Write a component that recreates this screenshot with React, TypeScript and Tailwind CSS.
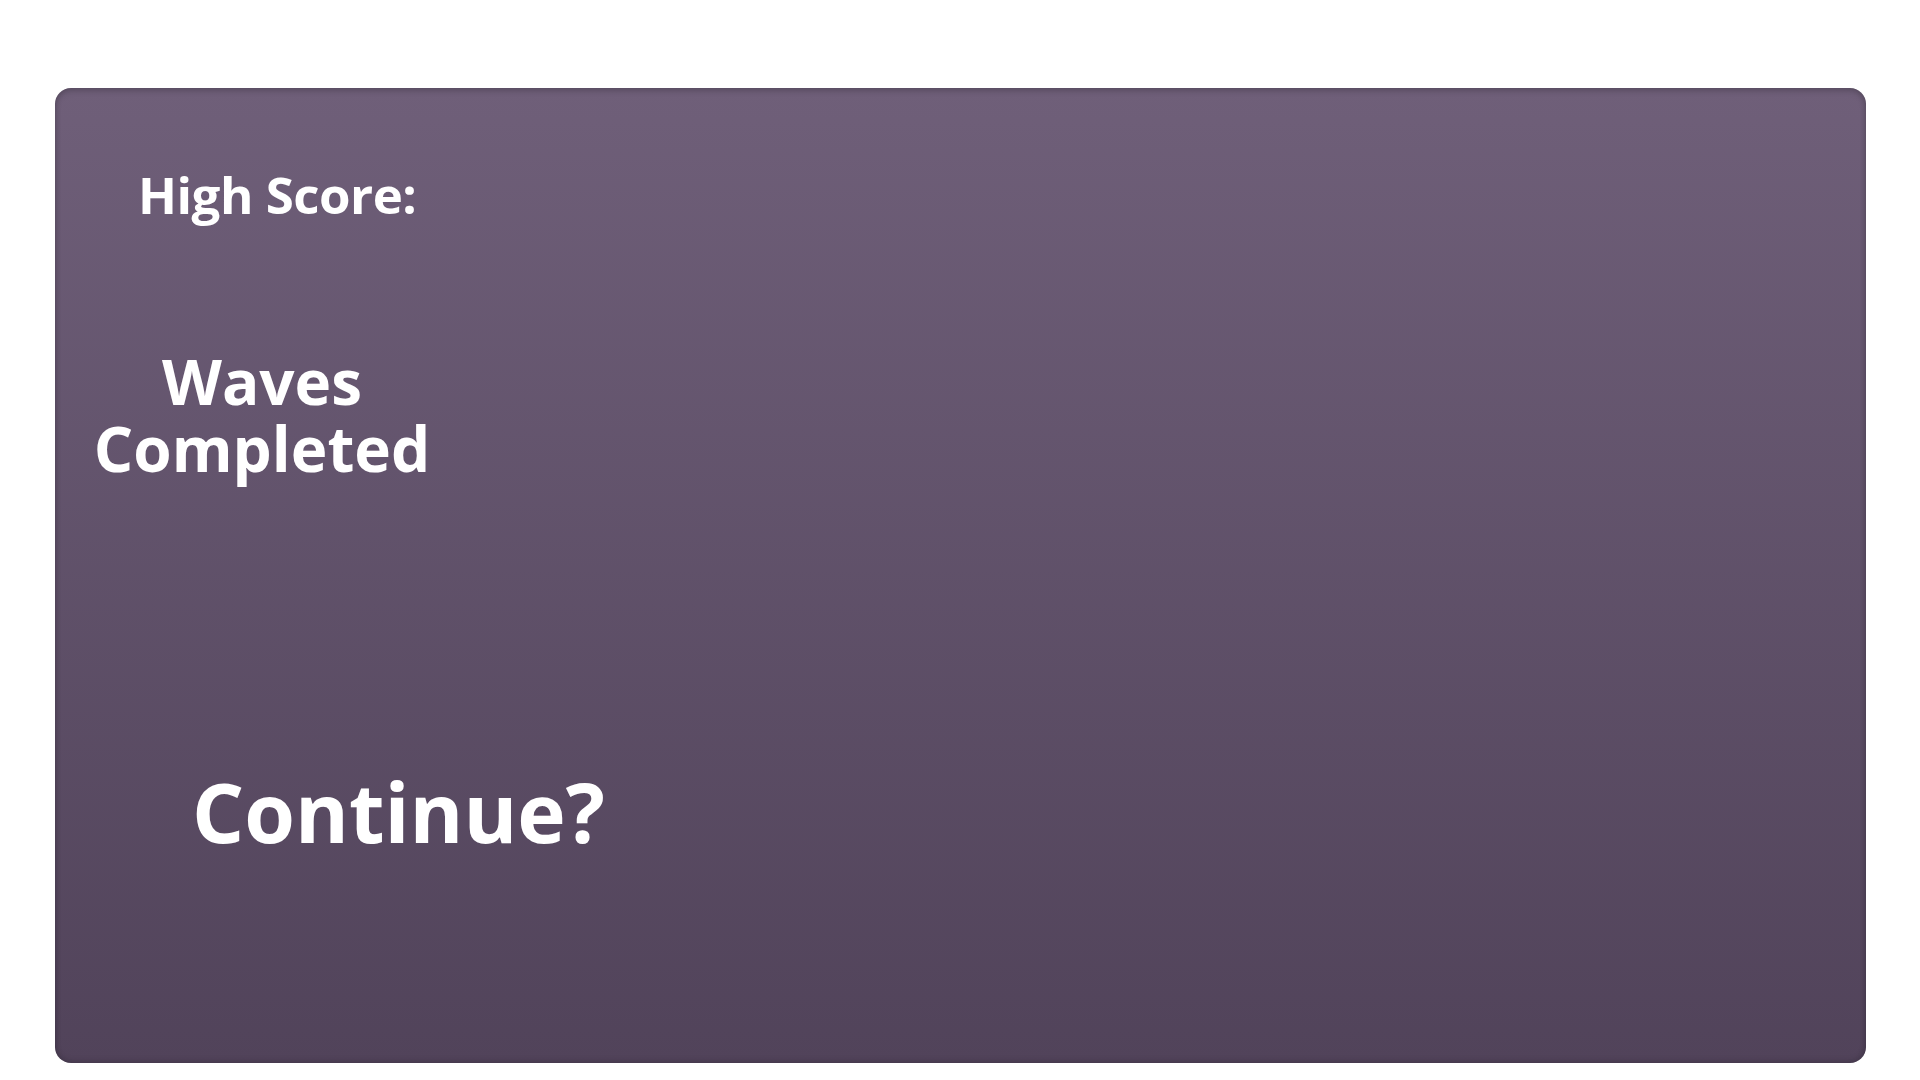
import React from 'react';

const font = { fontFamily: '"Open Sans", "Noto Sans", sans-serif' };

export default function App() {
  return (
    <div className="min-h-screen w-full bg-white pt-[88px] pl-[55px] pr-[54px]" style={font}>
      <div className="flex h-[975px] flex-col rounded-[16px] bg-gradient-to-b from-[#6f5f79] to-[#51435a] text-white shadow-[inset_0_3px_6px_rgba(0,0,0,0.18),inset_0_-2px_6px_rgba(0,0,0,0.15)]">
        <div className="pl-[83px] pt-[81px] text-[51px] font-bold leading-none tracking-[-0.5px]">
          High Score:
        </div>
        <div className="mt-[128px] w-[414px] text-center text-[62px] font-bold">
          <div className="leading-[67px]">Waves</div>
          <div className="leading-[67px]">Completed</div>
        </div>
        <div className="mt-[288px] pl-[137px] text-[82px] font-bold leading-none">
          Continue?
        </div>
      </div>
    </div>
  );
}
